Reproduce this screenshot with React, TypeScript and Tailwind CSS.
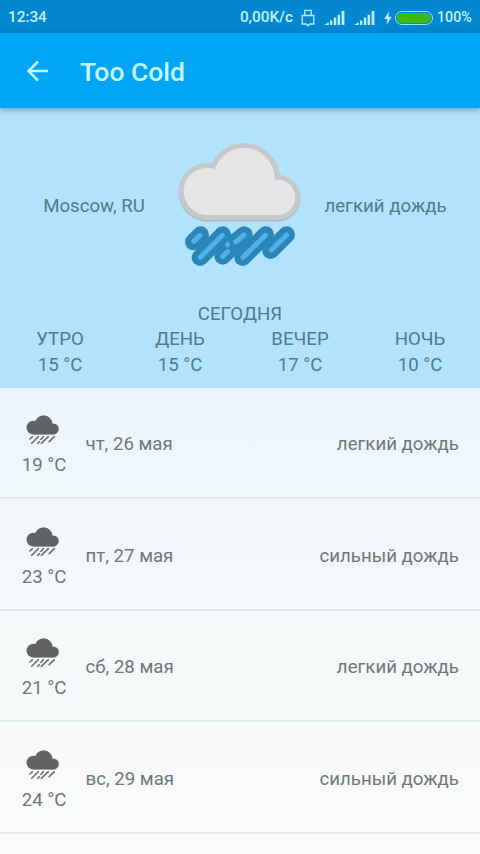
const parts = [
  { name: 'УТРО', temp: '15 °C' },
  { name: 'ДЕНЬ', temp: '15 °C' },
  { name: 'ВЕЧЕР', temp: '17 °C' },
  { name: 'НОЧЬ', temp: '10 °C' },
];

const days = [
  { date: 'чт, 26 мая', temp: '19 °C', text: 'легкий дождь' },
  { date: 'пт, 27 мая', temp: '23 °C', text: 'сильный дождь' },
  { date: 'сб, 28 мая', temp: '21 °C', text: 'легкий дождь' },
  { date: 'вс, 29 мая', temp: '24 °C', text: 'сильный дождь' },
];

const drops = [
  'M85 336 L107 314',
  'M105 383 L173 314',
  'M173 379 L214 338',
  'M212 334 L238 314',
  'M233 383 L302 314',
  'M317 362 L365 314',
];

const drip = [
  'M86 334 L105 316',
  'M106 382 L172 316',
  'M173 379 L188 365',
  'M187 344 L188 343',
  'M212 336 L237 315',
  'M234 382 L301 316',
  'M319 360 L365 315',
];

function CloudShape() {
  return (
    <>
      <circle cx="127" cy="184" r="71" />
      <circle cx="237" cy="146" r="92" />
      <circle cx="338" cy="202" r="53" />
      <rect x="127" y="170" width="211" height="85" />
    </>
  );
}

function BigRain() {
  return (
    <svg className="-mt-[5px] h-[145px] w-[150px] shrink-0" viewBox="0 0 450 435">
      <g strokeLinecap="round" fill="none">
        {drops.map((d) => (
          <path key={d} d={d} stroke="#2a86b8" strokeWidth="50" />
        ))}
        {drip.map((d) => (
          <path key={d} d={d} stroke="#50b2e6" strokeWidth="15" />
        ))}
      </g>
      <g transform="translate(0 4)" fill="#b1babd" stroke="#b1babd" strokeWidth="31" strokeLinejoin="round">
        <CloudShape />
      </g>
      <g fill="#c5c8ca" stroke="#c5c8ca" strokeWidth="30" strokeLinejoin="round">
        <CloudShape />
      </g>
      <g fill="#e7e5e7">
        <CloudShape />
      </g>
    </svg>
  );
}

function SmallRain() {
  return (
    <svg className="mr-[2px] h-[30px] w-[34px]" viewBox="0 0 34 30">
      <g fill="#616365">
        <circle cx="7.4" cy="12.7" r="6.9" />
        <circle cx="17.6" cy="9.3" r="9" />
        <circle cx="27.2" cy="14" r="5.6" />
        <rect x="7.4" y="11" width="19.8" height="8.6" />
      </g>
      <path
        d="M4 24 L6.3 21.7 M5.7 28.3 L12.3 21.7 M11.9 28.3 L13.3 26.7 M14.9 24.5 L17.3 21.7 M15.3 28.3 L22.3 21.7 M23.2 26.6 L28.3 21.7"
        stroke="#6b6d6f"
        strokeWidth="1.6"
        strokeLinecap="round"
      />
    </svg>
  );
}

function Signal() {
  return (
    <svg className="h-[16px] w-[22px]" viewBox="0 0 22 16" fill="#b9edff">
      <path d="M0 15 L4.8 12.2 V15 Z" />
      <rect x="6" y="10.5" width="2.3" height="4.5" />
      <rect x="9.8" y="7.5" width="2.5" height="7.5" />
      <rect x="13.6" y="4.8" width="2.5" height="10.2" />
      <rect x="17.6" y="1" width="2.8" height="14" />
    </svg>
  );
}

export default function App() {
  return (
    <div className="flex h-[854px] w-[480px] flex-col overflow-hidden bg-[#fafafa] font-['Roboto',sans-serif] text-[18.67px] leading-[25.4px]">
      <div className="flex h-[33px] shrink-0 items-center bg-[#0287d0] pt-[2px] pl-2 text-[15.3px] font-medium text-[#c4f2ff]">
        <span>12:34</span>
        <span className="ml-auto">0,00K/c</span>
        <svg className="ml-[8px] h-[18px] w-[14px]" viewBox="0 0 14 18" fill="none" stroke="#b9edff" strokeWidth="1.3">
          <path d="M3.8 6.5 V1.3 H10.2 V6.5 M1.2 6.5 H12.8 V15 H9 L7 16.6 L5 15 H1.2 Z" />
        </svg>
        <div className="ml-[9px]"><Signal /></div>
        <div className="ml-[8px]"><Signal /></div>
        <svg className="ml-[8px] h-[14px] w-[8px]" viewBox="0 0 8 14" fill="#b9edff">
          <path d="M5.2 0 L0.2 8 H3.4 L2.4 14 L7.8 5.8 H4.5 Z" />
        </svg>
        <div className="ml-[3px] h-[14px] w-[38px] rounded-full border-[1.5px] border-[#9fdff5] p-px">
          <div className="h-full rounded-full bg-[#42b814]" />
        </div>
        <span className="mr-[8px] ml-[4px] w-[35px] text-[14.2px] whitespace-nowrap">100%</span>
      </div>

      <div className="relative z-10 flex h-[75px] shrink-0 items-center bg-[#03a5f5] shadow-[0_2px_6px_rgba(0,60,90,0.4)]">
        <svg className="ml-[26px] h-[22px] w-[23px]" viewBox="0 0 23 22" fill="none" stroke="#c4f7ff" strokeWidth="2.5">
          <path d="M22 11 H2.5 M12 1.5 L2.5 11 L12 20.5" />
        </svg>
        <h1 className="ml-[31px] pt-[3px] text-[26.5px] font-medium text-[#c4f7ff]">Too Cold</h1>
      </div>

      <div className="h-[280px] shrink-0 bg-[#b2e3fc] text-[#4d7b8f]">
        <div className="flex h-[194px] items-center">
          <div className="w-[165px] pt-[3px] pl-[23px] text-center">Moscow, RU</div>
          <BigRain />
          <div className="w-[165px] pt-[3px] pr-[24px] text-center">легкий дождь</div>
        </div>
        <div className="text-center">СЕГОДНЯ</div>
        <div className="grid grid-cols-4 text-center">
          {parts.map((p) => (
            <div key={p.name}>
              <div>{p.name}</div>
              <div>{p.temp}</div>
            </div>
          ))}
        </div>
      </div>

      <div className="flex grow flex-col bg-linear-to-b from-[#ecf5fc] via-[#f5f9fa] to-[#fafafa] text-[#717678]">
        {days.map((d) => (
          <div key={d.date} className="flex h-[111.4px] shrink-0 items-center border-b-2 border-[#e2e8ea] pt-[5px] pr-[21px] pl-[22px]">
            <div className="flex w-[44px] flex-col items-center pt-[4px] whitespace-nowrap">
              <SmallRain />
              <div className="mt-[8px]">{d.temp}</div>
            </div>
            <div className="ml-[19.5px]">{d.date}</div>
            <div className="ml-auto">{d.text}</div>
          </div>
        ))}
      </div>
    </div>
  );
}
